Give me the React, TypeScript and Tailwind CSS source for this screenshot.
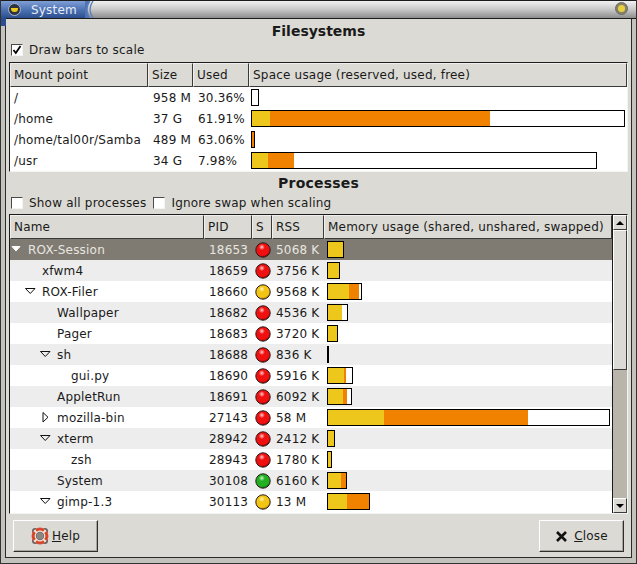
import React from 'react';

type Led = 'red' | 'yellow' | 'green';

interface Mount {
  path: string;
  size: string;
  used: string;
  total: number;
  reserved: number;
  usedTo: number;
}

interface Proc {
  name: string;
  pid: string;
  led: Led;
  rss: string;
  depth: number;
  arrow?: 'down' | 'right';
  total: number;
  shared: number;
  unshared: number;
}

const MOUNTS: Mount[] = [
  { path: '/', size: '958 M', used: '30.36%', total: 8, reserved: 0, usedTo: 0 },
  { path: '/home', size: '37 G', used: '61.91%', total: 374, reserved: 18, usedTo: 238 },
  { path: '/home/tal00r/Samba', size: '489 M', used: '63.06%', total: 4, reserved: 0, usedTo: 2 },
  { path: '/usr', size: '34 G', used: '7.98%', total: 346, reserved: 16, usedTo: 42 },
];

const PROCS: Proc[] = [
  { name: 'ROX-Session', pid: '18653', led: 'red', rss: '5068 K', depth: 0, arrow: 'down', total: 17, shared: 15, unshared: 15 },
  { name: 'xfwm4', pid: '18659', led: 'red', rss: '3756 K', depth: 1, total: 13, shared: 11, unshared: 11 },
  { name: 'ROX-Filer', pid: '18660', led: 'yellow', rss: '9568 K', depth: 1, arrow: 'down', total: 35, shared: 21, unshared: 31 },
  { name: 'Wallpaper', pid: '18682', led: 'red', rss: '4536 K', depth: 2, total: 21, shared: 14, unshared: 14 },
  { name: 'Pager', pid: '18683', led: 'red', rss: '3720 K', depth: 2, total: 11, shared: 9, unshared: 9 },
  { name: 'sh', pid: '18688', led: 'red', rss: '836 K', depth: 2, arrow: 'down', total: 2, shared: 0, unshared: 0 },
  { name: 'gui.py', pid: '18690', led: 'red', rss: '5916 K', depth: 3, total: 26, shared: 16, unshared: 18 },
  { name: 'AppletRun', pid: '18691', led: 'red', rss: '6092 K', depth: 2, total: 25, shared: 15, unshared: 19 },
  { name: 'mozilla-bin', pid: '27143', led: 'red', rss: '58 M', depth: 2, arrow: 'right', total: 283, shared: 56, unshared: 200 },
  { name: 'xterm', pid: '28942', led: 'red', rss: '2412 K', depth: 2, arrow: 'down', total: 8, shared: 6, unshared: 6 },
  { name: 'zsh', pid: '28943', led: 'red', rss: '1780 K', depth: 3, total: 5, shared: 3, unshared: 3 },
  { name: 'System', pid: '30108', led: 'green', rss: '6160 K', depth: 2, total: 20, shared: 13, unshared: 18 },
  { name: 'gimp-1.3', pid: '30113', led: 'yellow', rss: '13 M', depth: 2, arrow: 'down', total: 43, shared: 19, unshared: 41 },
];

const LED_COLORS: Record<Led, [string, string, string]> = {
  red: ['#ffd0d0', '#f01010', '#900000'],
  yellow: ['#fff6c0', '#f2c414', '#9a7400'],
  green: ['#c8f8c8', '#22b022', '#0a600a'],
};

const HeaderCell: React.FC<{ children: React.ReactNode }> = ({ children }) => (
  <div className="h-[24px] flex items-center pl-[3px] bg-[#dcdad5] border-r border-b border-[#3a3a38] border-l border-l-white/60 border-t border-t-white/60 overflow-hidden whitespace-nowrap">
    {children}
  </div>
);

const Check: React.FC<{ checked?: boolean }> = ({ checked }) => (
  <span className="w-[12px] h-[12px] bg-white border border-t-[#4a4a48] border-l-[#4a4a48] border-r-[#f4f4f2] border-b-[#f4f4f2] flex items-center justify-center shrink-0">
    {checked && (
      <svg width="10" height="10" viewBox="0 0 10 10">
        <path d="M1.5 5 L3.8 8 L8.5 1" fill="none" stroke="#000" strokeWidth="1.8" />
      </svg>
    )}
  </span>
);

const LedDot: React.FC<{ led: Led; id: string }> = ({ led, id }) => {
  const [a, b, c] = LED_COLORS[led];
  return (
    <svg width="16" height="16" viewBox="0 0 16 16">
      <defs>
        <radialGradient id={id} cx="0.42" cy="0.3" r="0.7">
          <stop offset="0" stopColor={a} />
          <stop offset="0.3" stopColor={b} />
          <stop offset="0.8" stopColor={b} />
          <stop offset="1" stopColor={c} />
        </radialGradient>
      </defs>
      <circle cx="8" cy="8" r="7.2" fill={`url(#${id})`} stroke="#2a1a1a" strokeWidth="1" />
    </svg>
  );
};

const Arrow: React.FC<{ dir: 'down' | 'right'; light?: boolean }> = ({ dir, light }) => (
  <svg width="11" height="11" viewBox="0 0 11 11" className="shrink-0">
    {dir === 'down' ? (
      <path d={light ? 'M1 2.5 H9 L5 7 Z' : 'M0.5 2.5 H10 L5.25 7.5 Z'} fill={light ? '#fff' : 'none'} stroke={light ? '#fff' : '#111'} />
    ) : (
      <path d="M3 0.5 V10 L8 5.25 Z" fill="none" stroke="#111" />
    )}
  </svg>
);

const Bar: React.FC<{ total: number; a: number; b: number }> = ({ total, a, b }) => (
  <div className="h-[17px] border border-black bg-white flex overflow-hidden shrink-0" style={{ width: total }}>
    <div className="h-full bg-[#edc71b] shrink-0" style={{ width: a }} />
    <div className="h-full bg-[#f08200] shrink-0" style={{ width: b - a }} />
  </div>
);

const LifeBuoy = () => (
  <svg width="18" height="18" viewBox="0 0 18 18" className="shrink-0">
    <rect x="1" y="1" width="16" height="16" rx="3" fill="#6a6664" />
    <circle cx="9" cy="9" r="6.2" fill="none" stroke="#f4e9e2" strokeWidth="4" />
    <path d="M5 3.6 A6.6 6.6 0 0 1 13 3.6 M5 14.4 A6.6 6.6 0 0 0 13 14.4 M3.6 5 A6.6 6.6 0 0 0 3.6 13 M14.4 5 A6.6 6.6 0 0 1 14.4 13" fill="none" stroke="#d8472b" strokeWidth="3" />
    <circle cx="9" cy="9" r="3.6" fill="#8a8682" />
  </svg>
);

const GtkButton: React.FC<{ children: React.ReactNode }> = ({ children }) => (
  <button className="w-[85px] h-[32px] flex items-center justify-center gap-[3px] bg-[#dcdad5] border border-t-white border-l-white border-r-[#2e2e2c] border-b-[#2e2e2c] shadow-[inset_-1px_-1px_0_#a8a59e]">
    {children}
  </button>
);

export default function App() {
  return (
    <div
      className="relative w-[637px] h-[564px] flex flex-col bg-[#c4c2bd] text-[#1a1a1a] text-[12px] tracking-[0.2px] overflow-hidden border-l border-r border-b border-[#333]"
      style={{ fontFamily: '"DejaVu Sans", sans-serif' }}
    >
      {/* title bar */}
      <div className="h-[19px] shrink-0 flex border-t border-b border-[#1c1c1c] bg-gradient-to-b from-[#f2f2f2] via-[#c8c8c8] to-[#8e8e8e]">
        <div className="w-[84px] flex items-center bg-gradient-to-b from-[#7f9fd6] via-[#4f74b4] to-[#2b4f8e] text-[#e6ecf7] text-[12px]">
          <span className="ml-[7px] w-[13px] h-[13px] rounded-full bg-[#2f3440] border border-[#a9b8d2] flex items-center justify-center">
            <span className="w-[7px] h-[4px] bg-[#eccb1c] rounded-b-full" />
          </span>
          <span className="ml-[10px]">System</span>
        </div>
        <svg width="11" height="17" viewBox="0 0 11 17" className="shrink-0">
          <path d="M0 0 H5 Q-1 8 5 17 H0 Z" fill="#4f74b4" />
          <path d="M5 0 Q-1 8 5 17 M8 0 Q2 8 8 17" fill="none" stroke="#5b7fbc" strokeWidth="1.3" />
        </svg>
        <div className="flex-1" />
        <span className="mr-[8px] mt-[1px] w-[13px] h-[13px] rounded-full bg-[#86836a] border border-[#6a6a62] flex items-center justify-center">
          <span className="w-[7px] h-[7px] rounded-full bg-[#e8d040]" />
        </span>
      </div>
      {/* blue corner of the frame below the title */}
      <div className="absolute left-0 top-[18px] w-[5px] h-[8px] bg-[#2b4f8e]" />

      {/* window body */}
      <div className="flex-1 mx-[4px] mb-[5px] flex flex-col border-l border-r border-b border-[#2a2a28] bg-[#dcdad5] px-[3px]">
        <div className="h-[22px] pt-[2px] flex items-center justify-center font-bold text-[14px] shrink-0 tracking-normal">Filesystems</div>
        <div className="h-[18px] flex items-center gap-[6px] pl-[2px] shrink-0">
          <Check checked />
          <span>Draw bars to scale</span>
        </div>

        <div className="mt-[3px] border border-[#1c1c1c] border-b-[#f4f4f2] border-r-[#f4f4f2] bg-white shrink-0">
          <div className="grid grid-cols-[138px_45px_56px_1fr]">
            <HeaderCell>Mount point</HeaderCell>
            <HeaderCell>Size</HeaderCell>
            <HeaderCell>Used</HeaderCell>
            <HeaderCell>Space usage (reserved, used, free)</HeaderCell>
          </div>
          {MOUNTS.map((m) => (
            <div key={m.path} className="grid grid-cols-[138px_45px_56px_1fr] h-[21px] items-center">
              <span className="pl-[4px] whitespace-nowrap">{m.path}</span>
              <span className="pl-[5px]">{m.size}</span>
              <span className="pl-[5px]">{m.used}</span>
              <span className="pl-[2px]">
                <Bar total={m.total} a={m.reserved} b={m.usedTo} />
              </span>
            </div>
          ))}
        </div>

        <div className="h-[22px] flex items-center justify-center font-bold text-[14px] shrink-0">Processes</div>
        <div className="h-[18px] flex items-center pl-[2px] shrink-0">
          <Check />
          <span className="ml-[6px]">Show all processes</span>
          <span className="ml-[7px]"><Check /></span>
          <span className="ml-[6px]">Ignore swap when scaling</span>
        </div>

        <div className="mt-[2px] flex h-[300px] border border-[#1c1c1c] border-b-[#f4f4f2] border-r-[#f4f4f2] shrink-0">
          <div className="flex-1 min-w-0 bg-white">
            <div className="grid grid-cols-[194px_48px_20px_52px_1fr]">
              <HeaderCell>Name</HeaderCell>
              <HeaderCell>PID</HeaderCell>
              <HeaderCell>S</HeaderCell>
              <HeaderCell>RSS</HeaderCell>
              <HeaderCell>Memory usage (shared, unshared, swapped)</HeaderCell>
            </div>
            {PROCS.map((p, i) => {
              const selected = i === 0;
              return (
                <div
                  key={p.pid}
                  className={
                    'grid grid-cols-[194px_48px_20px_52px_1fr] h-[21px] items-center ' +
                    (selected ? 'bg-[#7f7b72] text-[#e8e6e0]' : i % 2 === 1 ? 'bg-[#ededed]' : 'bg-white')
                  }
                >
                  <div className="flex items-center">
                    <span className="w-[18px] shrink-0 flex justify-start pl-[1px]" style={{ marginLeft: Math.floor(p.depth * 14.5) }}>
                      {p.arrow && <Arrow dir={p.arrow} light={selected} />}
                    </span>
                    <span>{p.name}</span>
                  </div>
                  <span className="pl-[5px]">{p.pid}</span>
                  <span className="pl-[3px] flex"><LedDot led={p.led} id={'led' + i} /></span>
                  <span className="pl-[4px] whitespace-nowrap">{p.rss}</span>
                  <span className="pl-[3px]">
                    <Bar total={p.total} a={p.shared} b={p.unshared} />
                  </span>
                </div>
              );
            })}
          </div>
          <div className="w-[15px] shrink-0 flex flex-col bg-[#bab5ab] border-l border-[#1c1c1c]">
            <div className="h-[15px] bg-[#dcdad5] border border-t-white border-l-white border-r-[#3a3a38] border-b-[#3a3a38] flex items-center justify-center">
              <span className="w-0 h-0 border-l-[4px] border-r-[4px] border-b-[4px] border-transparent border-b-black" />
            </div>
            <div className="h-[140px] bg-[#dcdad5] border border-t-white border-l-white border-r-[#3a3a38] border-b-[#3a3a38] shrink-0" />
            <div className="flex-1" />
            <div className="h-[15px] bg-[#dcdad5] border border-t-white border-l-white border-r-[#3a3a38] border-b-[#3a3a38] flex items-center justify-center">
              <span className="w-0 h-0 border-l-[4px] border-r-[4px] border-t-[4px] border-transparent border-t-black" />
            </div>
          </div>
        </div>

        <div className="flex justify-between items-start pt-[6px] px-[4px]">
          <GtkButton>
            <LifeBuoy />
            <span><span className="underline">H</span>elp</span>
          </GtkButton>
          <GtkButton>
            <svg width="13" height="13" viewBox="0 0 13 13" className="shrink-0 mr-[3px]">
              <path d="M2 2 L11 11 M11 2 L2 11" stroke="#111" strokeWidth="2.6" />
            </svg>
            <span><span className="underline">C</span>lose</span>
          </GtkButton>
        </div>
      </div>
    </div>
  );
}
